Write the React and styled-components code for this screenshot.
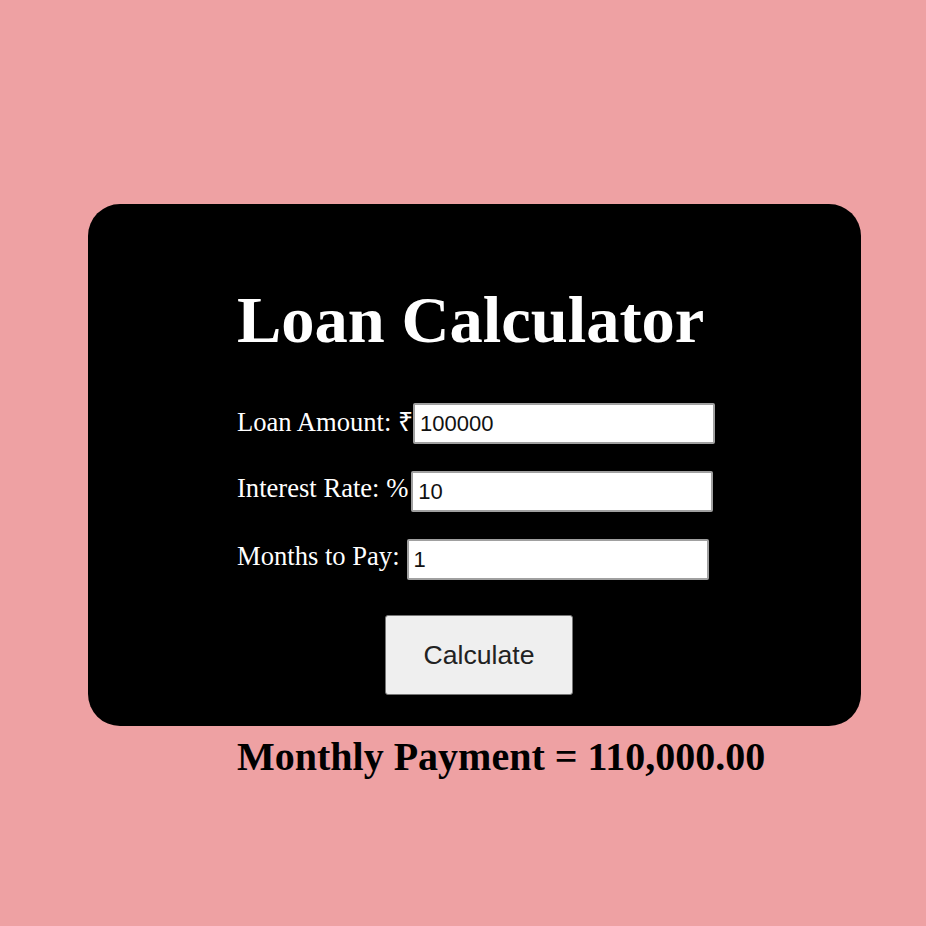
import React from "react";
import styled, { createGlobalStyle } from "styled-components";

const Global = createGlobalStyle`
  html, body { margin: 0; padding: 0; }
  body {
    background: #eea1a3;
    font-family: "Liberation Serif", "Times New Roman", serif;
    width: 926px;
    height: 926px;
    overflow: hidden;
  }
`;

const Page = styled.div`
  padding: 204px 0 0 88px;
`;

const Card = styled.div`
  width: 773px;
  height: 522px;
  box-sizing: border-box;
  background: #000;
  border-radius: 32px;
  padding: 78px 0 0 149px;
  color: #fff;
`;

const Title = styled.h1`
  margin: 0 0 44px;
  font-size: 66.5px;
  font-weight: bold;
  line-height: 1.15;
  height: 77px;
`;

const Row = styled.div`
  display: flex;
  align-items: center;
  height: 41px;
  margin-bottom: 27px;
  font-size: 26.6px;
`;

const Label = styled.span`
  white-space: pre;
  margin-right: ${(p) => p.$gap}px;
  margin-bottom: 6px;
`;

const Input = styled.input`
  box-sizing: border-box;
  width: 302px;
  height: 41px;
  border: 2px solid #a0a0a0;
  border-radius: 2px;
  background: #fff;
  padding: 0 5px;
  font-family: "Liberation Sans", Arial, sans-serif;
  font-size: 22px;
  color: #111;
  outline: none;
`;

const ButtonWrap = styled.div`
  padding-left: 148px;
  padding-top: 8px;
`;

const Button = styled.button`
  width: 188px;
  height: 80px;
  border: 1px solid #767676;
  border-radius: 3px;
  background: #efefef;
  font-family: "Liberation Sans", Arial, sans-serif;
  font-size: 26.6px;
  color: #222;
`;

const Result = styled.h2`
  margin: 8px 0 0 149px;
  font-size: 40px;
  font-weight: bold;
  color: #000;
  line-height: 1.15;
`;

export default function App() {
  return (
    <>
      <Global />
      <Page>
        <Card>
          <Title>Loan Calculator</Title>
          <Row>
            <Label $gap={0}>Loan Amount: ₹</Label>
            <Input defaultValue="100000" />
          </Row>
          <Row>
            <Label $gap={3}>Interest Rate: %</Label>
            <Input defaultValue="10" />
          </Row>
          <Row>
            <Label $gap={7}>Months to Pay:</Label>
            <Input defaultValue="1" />
          </Row>
          <ButtonWrap>
            <Button>Calculate</Button>
          </ButtonWrap>
        </Card>
        <Result>Monthly Payment = 110,000.00</Result>
      </Page>
    </>
  );
}
